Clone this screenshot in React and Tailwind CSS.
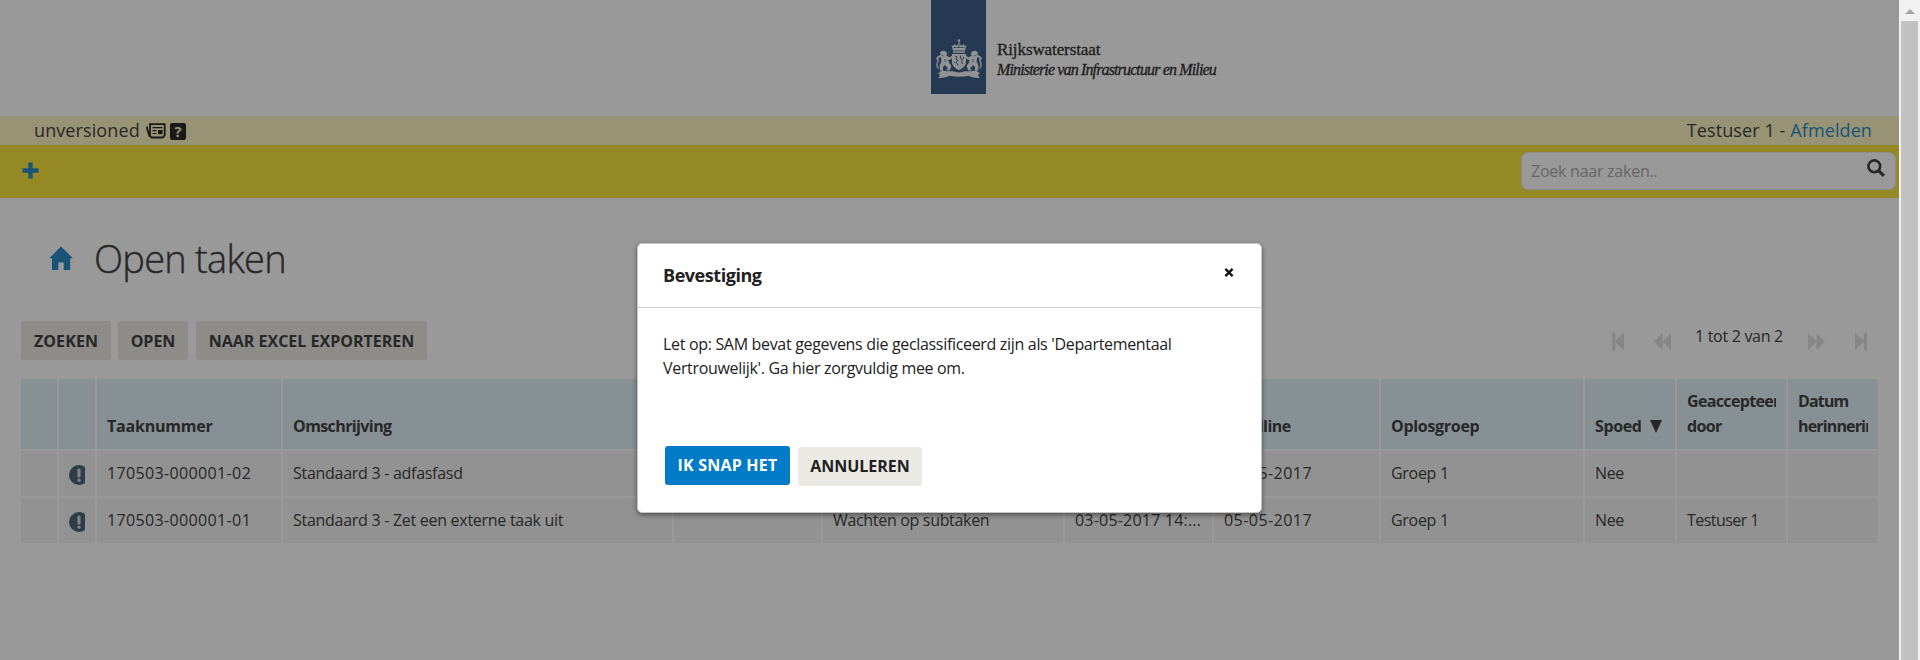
const columns = [
  { label: "", width: "w-9", tracking: "" },
  { label: "", width: "w-9", tracking: "" },
  { label: "Taaknummer", width: "w-[184px]", tracking: "tracking-[-0.2px]" },
  { label: "Omschrijving", width: "w-[389px]", tracking: "tracking-[-0.6px]" },
  { label: "", width: "w-[147px]", tracking: "" },
  { label: "", width: "w-[240px]", tracking: "" },
  { label: "", width: "w-[147px]", tracking: "" },
  { label: "Deadline", width: "w-[165px]", tracking: "tracking-[-0.5px]" },
  { label: "Oplosgroep", width: "w-[202px]", tracking: "tracking-[-0.3px]" },
  { label: "Spoed", width: "w-[90px]", tracking: "tracking-[-0.4px]", sorted: true },
  { label: "Geaccepteerd door", width: "w-[109px]", tracking: "tracking-[-0.65px]" },
  { label: "Datum herinnering", width: "w-[90px]", tracking: "tracking-[-0.85px]" },
];

const rows = [
  ["", "!", "170503-000001-02", "Standaard 3 - adfasfasd", "", "", "", "05-05-2017", "Groep 1", "Nee", "", ""],
  ["", "!", "170503-000001-01", "Standaard 3 - Zet een externe taak uit", "", "Wachten op subtaken", "03-05-2017 14:...", "05-05-2017", "Groep 1", "Nee", "Testuser 1", ""],
];

const cellTracking = ["", "", "tracking-[0.36px]", "tracking-[-0.28px]", "", "tracking-[-0.32px]", "tracking-[0.2px]", "tracking-[0.45px]", "tracking-[-0.3px]", "tracking-[-0.4px]", "tracking-[-0.55px]", ""];

function Lion() {
  return (
    <g>
      <path d="M4.5 14.5c1-2 3-3 5-2.5 1.500.3 2.500 1.500 2.700 3l-1 1.500c1.500 1 3 2 4 1.500l2-1.500.6 1.500-2 2.500-2.500.5 1 3c1.500 1.500 2.500 3 1.500 5l-1.500 2.500h-3l1.500-2.500-3-3-2 2.500.5 3H4.500l.5-1.500-.6-3 2-4.500-.5-4.500-2.500 1 .3 1.500-2.200-1 .6-1.800 3-1.700 1-1.500z" />
      <path d="M3.500 29.500C1 27.500 1.800 24 3 22.500c.5-1.500-.5-2.500-1.500-3.500" fill="none" stroke="#f0f3f6" strokeWidth="1.300" />
      <path d="M9.500 20l1 3M6.500 16l2 1" stroke="#3e6189" strokeWidth=".7" />
    </g>
  );
}

function CoatOfArms() {
  return (
    <svg viewBox="0 0 48 40" className="h-[40px] w-[48px]" fill="#f0f3f6">
      <circle cx="24" cy="1.500" r="1.200" />
      <path d="M23.500 2h1v4h-1z" />
      <path d="M18 11.500 16.500 6l2 1 1-2 2 1.800L24 4.500l2.500 2.300 2-1.800 1 2 2-1L30 11.500z" />
      <path d="M18.500 8.500h11M24 5v4" stroke="#3e6189" strokeWidth=".7" />
      <path d="M18 12.300h12v1.500H18z" />
      <path d="M17 15h14v8c0 4-3.500 6.500-7 8-3.500-1.500-7-4-7-8z" />
      <path d="M20 17l2 1-1 2 2 1.500-1.500 2 1.500 3M26 16.500l-1 2.500 2.500 1.500-1 2 1 2.500M19 22.500l1.500 1.500M28.500 18v2" fill="none" stroke="#3e6189" strokeWidth="1" />
      <Lion />
      <g transform="translate(48 0) scale(-1 1)"><Lion /></g>
      <path d="M3 34.500l4-3.200c5 2 9 0 13 1.500q4 1.200 8 0c4-1.500 8 .5 13-1.500l4 3.200-2 1 1.500 3.800c-5-.5-8-1-11-2.500q-9 2-19 0c-3 1.500-6 2-11 2.500l1.500-3.800z" />
    </svg>
  );
}

function Alert() {
  return (
    <span className="block h-5 w-4 overflow-hidden">
      <svg viewBox="0 0 20 20" className="h-5 w-5 max-w-none">
        <circle cx="10" cy="10" r="10" fill="#4d6878" />
        <rect x="8.400" y="3.500" width="3.200" height="9" rx="1.500" fill="#d4dade" />
        <circle cx="10" cy="15.200" r="1.600" fill="#d4dade" />
      </svg>
    </span>
  );
}

function Pager() {
  return (
    <div className="mt-[10px] flex h-[19px] text-[#dfdfdf]">
      <svg viewBox="0 0 13 19" className="mt-px h-[19px] w-[13px]" fill="currentColor"><path d="M0 .5h3.300v8.200L12 .5v18L3.300 10v8.500H0z" /></svg>
      <svg viewBox="0 0 17 19" className="ml-[29px] mt-px h-[19px] w-[17px]" fill="currentColor"><path d="M8.500 1v17L0 9.500zM17 1v17L8.500 9.500z" /></svg>
      <span className="ml-6 mt-[-5px] w-[88px] whitespace-nowrap text-[16px] leading-5 tracking-[-0.3px] text-[#444]">1 tot 2 van 2</span>
      <svg viewBox="0 0 17 19" className="ml-[25px] mt-px h-[19px] w-[17px]" fill="currentColor"><path d="M0 1v17l8.500-8.500zM8.500 1v17L17 9.500z" /></svg>
      <svg viewBox="0 0 13 19" className="ml-[30px] mt-px h-[19px] w-[13px]" fill="currentColor"><path d="M0 .5v18L8.700 10v8.500H12V.5H8.700v8.200z" /></svg>
    </div>
  );
}

function GreyButton({ children, className }) {
  return (
    <button className={"flex h-[39px] items-center justify-center whitespace-nowrap rounded-[3px] bg-[#ebe9e4] text-[16px] font-bold leading-6 " + className}>
      {children}
    </button>
  );
}

function Page() {
  return (
    <div className="flex h-full flex-col bg-white text-[#444]">
      <header className="flex h-[116px] pl-[931px]">
        <div className="flex h-[94px] w-[55px] flex-col items-center bg-[#3e6189] pt-[39px]"><CoatOfArms /></div>
        <div className="ml-[11px] whitespace-nowrap pt-[40px] font-['Liberation_Serif',serif] leading-5 text-[#333] [-webkit-text-stroke:0.3px_#333]">
          <p className="text-[17px] tracking-[-0.1px]">Rijkswaterstaat</p>
          <p className="text-[16px] italic tracking-[-0.86px]">Ministerie van Infrastructuur en Milieu</p>
        </div>
      </header>

      <div className="flex h-[29px] items-center justify-between bg-[#fdf5c1] pl-[34px] pr-[27px] text-[18px]">
        <div className="flex items-center">
          <span className="mt-[-1px] w-[112px] leading-6 tracking-[0.1px]">unversioned</span>
          <svg viewBox="0 0 20 16" className="h-4 w-5 text-[#2b2b2b]" fill="none" stroke="currentColor">
            <path d="M4 1.200h14.700v11.300l-2 2H5.500L4 13z" strokeWidth="1.800" />
            <path d="M1 3.500v1.500l2.500 8.500" strokeWidth="1.800" />
            <path d="M6.500 4.700h10M6.500 7.700h4M6.500 10.500h4" strokeWidth="1.200" />
            <path d="M12 7h4.500v4.200H12z" fill="currentColor" stroke="none" />
          </svg>
          <span className="ml-1 mt-px flex h-[17px] w-4 items-center justify-center rounded-[2px] bg-[#2b2b2b] text-[15px] font-bold leading-4 text-[#fdf5c1]">?</span>
        </div>
        <div className="mt-[-1px] leading-6 tracking-[0.1px]">Testuser 1 - <a className="text-[#2a8dc9]">Afmelden</a></div>
      </div>

      <div className="flex h-[53px] items-start justify-between bg-[#f9e43f] pl-[22px] pr-[3px] pt-[7px]">
        <svg viewBox="0 0 17 17" className="mt-[10px] h-[17px] w-[17px]" fill="#2a8dc9"><path d="M6.300.5h4.400v5.800h5.800v4.400h-5.800v5.800H6.300v-5.800H.5V6.300h5.800z" /></svg>
        <div className="flex h-[38px] w-[375px] justify-between rounded-[7px] border border-[#ededed] bg-white pl-[9px] pr-[10px] pt-[6px]">
          <span className="text-[16px] leading-6 tracking-[-0.25px] text-[#aaa]">Zoek naar zaken..</span>
          <svg viewBox="0 0 19 19" className="h-[18px] w-[18px]" fill="none" stroke="#444"><circle cx="7.700" cy="7.700" r="6.200" strokeWidth="2.800" /><path d="M12 12l5.800 5.800" strokeWidth="3.400" /></svg>
        </div>
      </div>

      <div className="flex h-[123px] items-start pl-[49px]">
        <svg viewBox="0 0 24 24" className="mt-[48px] h-6 w-6" fill="#2a8dc9"><path d="M12 .5L24 12.300h-2.800V24h-6.500v-7.500H9.300V24H3V12.300H.2z" /></svg>
        <h1 className="ml-[21px] mt-[36px] text-[38px] font-light leading-[48px] tracking-[-0.75px] [-webkit-text-stroke:0.4px_#444]">Open taken</h1>
      </div>

      <div className="flex h-[58px] justify-between pl-[21px] pr-[31px]">
        <div className="flex">
          <GreyButton className="w-[90px] tracking-[0.1px]">ZOEKEN</GreyButton>
          <GreyButton className="ml-[7px] w-[70px]">OPEN</GreyButton>
          <GreyButton className="ml-2 w-[231px]">NAAR EXCEL EXPORTEREN</GreyButton>
        </div>
        <Pager />
      </div>

      <div className="ml-[21px] flex w-[1858px] flex-col gap-[2px] text-[16px]">
        <div className="flex gap-[2px]">
          {columns.map((c, i) => (
            <div key={i} className={"flex h-[70px] shrink-0 items-end bg-[#e0f0f8] px-[10px] pb-[10px] font-bold leading-[25px] " + c.width}>
              <span className={"overflow-hidden " + c.tracking}>{c.label}</span>
              {c.sorted && <svg viewBox="0 0 12 13" className="mb-[6px] ml-[9px] h-[13px] w-3 shrink-0" fill="#444"><path d="M0 0h12L6 13z" /></svg>}
            </div>
          ))}
        </div>
        {rows.map((row, r) => (
          <div key={r} className="flex gap-[2px]">
            {row.map((cell, i) => (
              <div key={i} className={"flex h-[45px] shrink-0 items-center overflow-hidden whitespace-nowrap bg-[#f3f3f3] px-[10px] pb-[2px] leading-6 " + columns[i].width + " " + cellTracking[i]}>
                {cell === "!" ? <div className="mt-[5px]"><Alert /></div> : cell}
              </div>
            ))}
          </div>
        ))}
      </div>
    </div>
  );
}

function Dialog() {
  return (
    <div className="absolute left-[637px] top-[243px] flex h-[270px] w-[625px] flex-col rounded-[5px] border border-[#c4c4c4] bg-white text-[#222] shadow-[0_2px_5px_rgba(0,0,0,0.45)]">
      <div className="flex h-[64px] items-start justify-between border-b border-[#ccc] pl-[25px] pr-[27px]">
        <h2 className="mt-[19px] text-[18px] font-bold leading-6 tracking-[-0.45px]">Bevestiging</h2>
        <svg viewBox="0 0 10 10" className="mt-6 h-[9px] w-[10px]" stroke="#111" strokeWidth="2.600"><path d="M1 1l8 8M9 1L1 9" /></svg>
      </div>
      <p className="mt-[24px] whitespace-nowrap pl-[25px] text-[16px] leading-6 tracking-[-0.32px]">
        Let op: SAM bevat gegevens die geclassificeerd zijn als 'Departementaal<br />Vertrouwelijk'. Ga hier zorgvuldig mee om.
      </p>
      <div className="mt-[66px] flex pl-[27px]">
        <button className="flex h-[39px] w-[125px] items-center justify-center rounded-[3px] bg-[#007bc7] pb-px text-[16px] font-bold leading-6 tracking-[0.2px] text-white">IK SNAP HET</button>
        <GreyButton className="ml-2 mt-px w-[124px] pb-px">ANNULEREN</GreyButton>
      </div>
    </div>
  );
}

export default function App() {
  return (
    <div className="relative flex h-[660px] w-[1920px] overflow-hidden font-['Open_Sans','Noto_Sans',sans-serif]">
      <div className="relative h-full w-[1899px]">
        <Page />
        <div className="absolute inset-0 bg-black/40" />
      </div>
      <div className="flex w-[21px] flex-col bg-[#f1f1f1] pl-[2px] pr-[2px]">
        <div className="flex h-[21px] items-center justify-center pt-[2px]">
          <svg viewBox="0 0 10 5" className="h-[5px] w-[10px]" fill="#a3a3a3"><path d="M5 0l5 5H0z" /></svg>
        </div>
        <div className="flex-1 bg-[#c1c1c1]" />
      </div>
      <Dialog />
    </div>
  );
}
